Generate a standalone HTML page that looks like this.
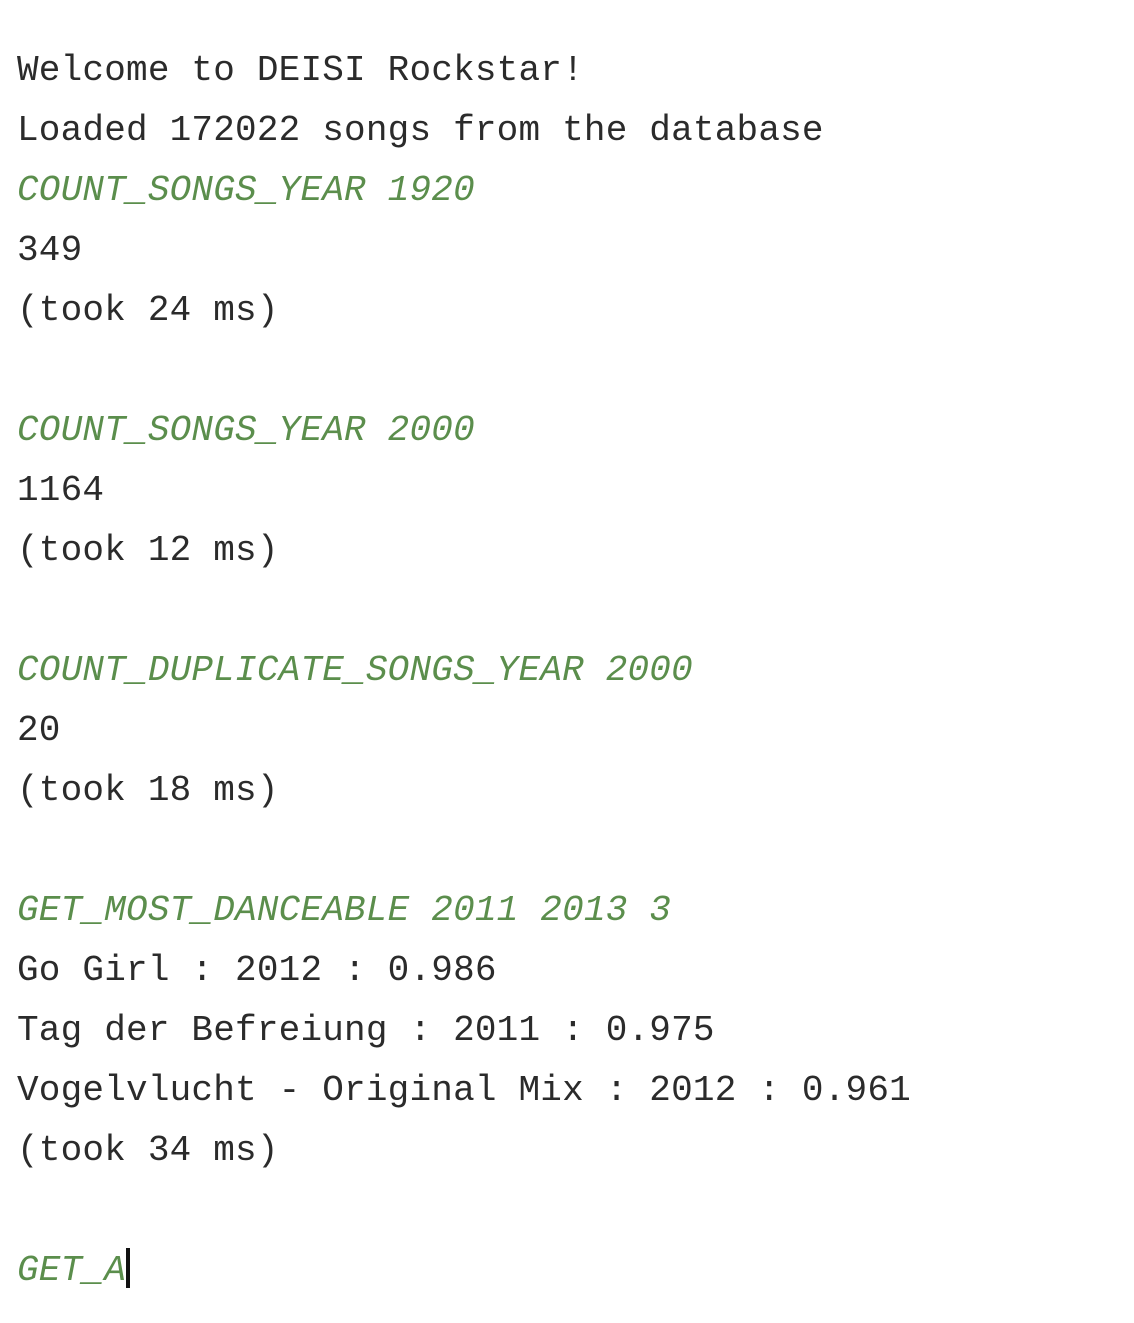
<!DOCTYPE html>
<html><head><meta charset="utf-8"><style>
html,body{margin:0;padding:0;background:#fff;width:1134px;height:1323px;overflow:hidden}
.c{position:absolute;left:17px;top:41px;font-family:"Liberation Mono",monospace;font-size:36px;letter-spacing:0.2px;line-height:60px;color:#2b2b2b;white-space:pre}
.g{color:#5b8e4c;font-style:italic}
.cur{display:inline-block;width:4px;height:40px;background:#111;vertical-align:-8px}
</style></head><body><div class="c">Welcome to DEISI Rockstar!
Loaded 172022 songs from the database
<span class="g">COUNT_SONGS_YEAR 1920</span>
349
(took 24 ms)

<span class="g">COUNT_SONGS_YEAR 2000</span>
1164
(took 12 ms)

<span class="g">COUNT_DUPLICATE_SONGS_YEAR 2000</span>
20
(took 18 ms)

<span class="g">GET_MOST_DANCEABLE 2011 2013 3</span>
Go Girl : 2012 : 0.986
Tag der Befreiung : 2011 : 0.975
Vogelvlucht - Original Mix : 2012 : 0.961
(took 34 ms)

<span class="g">GET_A</span><span class="cur"></span></div></body></html>
